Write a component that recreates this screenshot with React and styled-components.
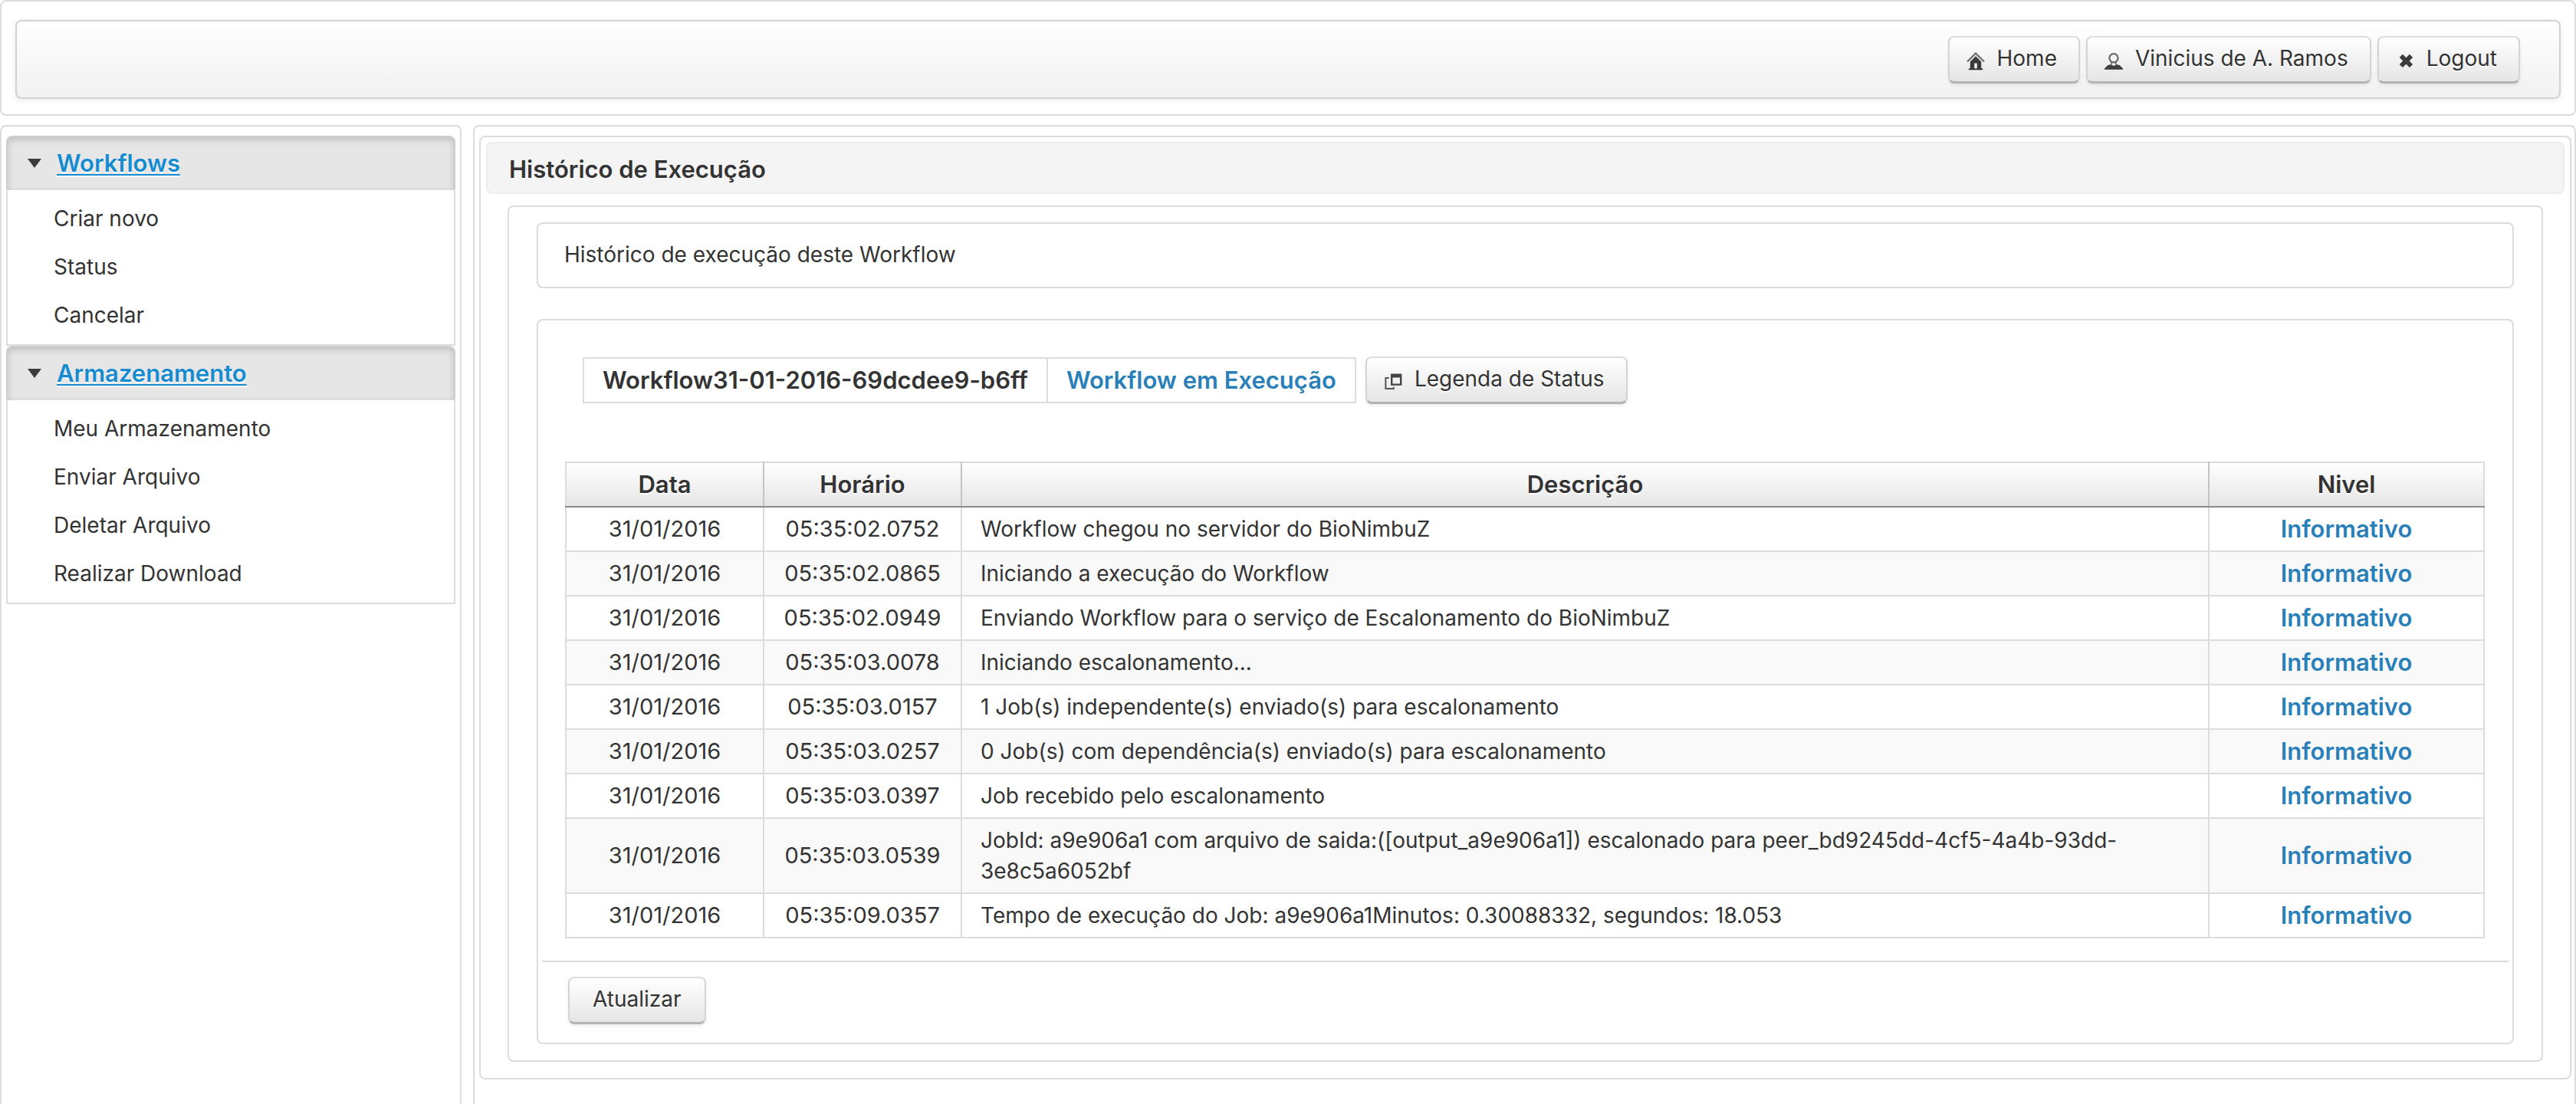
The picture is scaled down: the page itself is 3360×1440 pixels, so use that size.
import React from "react";
import styled, { createGlobalStyle, css } from "styled-components";

const LINE = "#dcdcdc";
const BLUE = "#2980b9";

const GlobalStyle = createGlobalStyle`
  *, *::before, *::after { box-sizing: border-box; }
  body {
    margin: 0;
    background: #fff;
    color: #333;
    font-family: Inter, "Liberation Sans", sans-serif;
    font-size: 28px;
    line-height: 40px;
  }
`;

const strong = css`
  font-size: 31px;
  font-weight: 600;
`;

const Page = styled.div`
  display: flex;
  flex-direction: column;
  gap: 12px;
  height: 100vh;
  overflow: hidden;
`;

const Panel = styled.section`
  border: 2px solid ${LINE};
  border-radius: 8px;
`;

const North = styled(Panel).attrs({ as: "header" })`
  padding: 24px 18px 20px;
`;

const Toolbar = styled.nav`
  display: flex;
  justify-content: flex-end;
  gap: 8px;
  padding: 19px 51px 18px;
  border: 2px solid #d2d2d2;
  border-radius: 8px;
  background: linear-gradient(#fff, #f1f1f1);
  box-shadow: 0 2px 8px rgba(0, 0, 0, 0.08);
`;

const Button = styled.button`
  display: inline-flex;
  align-items: flex-end;
  gap: 16px;
  padding: 7px ${(p) => (p.$icon ? "28px" : "30px")} 10px ${(p) => (p.$icon ? "22px" : "30px")};
  border: 2px solid #d4d4d4;
  border-top-color: #dedede;
  border-bottom: 3px solid #b4b4b4;
  border-radius: 8px;
  background: linear-gradient(#fff, #e5e5e5);
  box-shadow: 0 2px 4px rgba(0, 0, 0, 0.08);
  color: #333;
  font: inherit;
  text-shadow: 0 2px 0 #fff;
  white-space: nowrap;
  cursor: pointer;
`;

const Glyph = styled.svg`
  width: 24px;
  height: 24px;
  margin-bottom: 4px;
  flex: none;
`;

const Columns = styled.div`
  display: grid;
  grid-template-columns: 602px minmax(0, 1fr);
  gap: 15px;
  flex: 1;
  min-height: 0;
`;

const West = styled(Panel).attrs({ as: "aside" })`
  padding: 12px 6px;
  border-bottom: 0;
  border-radius: 8px 8px 0 0;
`;

const Center = styled(Panel).attrs({ as: "main" })`
  padding: 12px 4px 0 6px;
  border-bottom: 0;
  border-radius: 8px 8px 0 0;
`;

const MenuHeader = styled.h3`
  display: flex;
  align-items: center;
  gap: 20px;
  margin: 0;
  padding: 14px 26px 15px;
  border: 2px solid #cecece;
  border-bottom: 0;
  border-radius: 8px 8px 2px 2px;
  background: #e6e6e6;
  box-shadow: inset 0 3px 8px rgba(0, 0, 0, 0.18);
  text-shadow: 0 2px 0 #fff;
  ${strong}
`;

const Arrow = styled.svg`
  width: 18px;
  height: 12px;
  flex: none;
`;

const MenuLink = styled.a`
  color: #168bd0;
  text-decoration: underline;
  text-decoration-thickness: 2px;
  text-underline-offset: 3px;
`;

const MenuList = styled.ul`
  margin: 0;
  padding: 5px 0 7px;
  border: 2px solid ${LINE};
  border-top: 0;
  list-style: none;
`;

const MenuItem = styled.li`
  display: flex;
  align-items: center;
  height: 63px;
  padding: 0 60px;
`;

const ItemLink = styled.a`
  color: inherit;
  text-decoration: none;
`;

const Outer = styled(Panel)`
  padding: 6px 7px 21px;
`;

const Title = styled.h2`
  margin: 0 0 15px;
  padding: 14px 28px 10px;
  border: 2px solid #ececec;
  border-radius: 8px;
  background: #f4f4f4;
  ${strong}
`;

const Inner = styled(Panel)`
  margin: 0 28px;
  padding: 20px 36px 21px;
`;

const Intro = styled(Panel)`
  margin-bottom: 40px;
  padding: 20px 34px 22px;
`;

const History = styled(Panel)`
  padding: 47px 5px 24px;
`;

const StatusRow = styled.div`
  display: flex;
  align-items: center;
  gap: 12px;
  margin: 0 53px 75px;
`;

const StatusBox = styled.div`
  display: flex;
  border: 2px solid ${LINE};
`;

const StatusCell = styled.div`
  padding: 8px 24px;
  white-space: nowrap;
  color: ${(p) => (p.$state ? BLUE : "inherit")};
  border-left: ${(p) => (p.$state ? `2px solid ${LINE}` : "0")};
  ${strong}
`;

const TableWrap = styled.div`
  padding: 0 31px 29px 30px;
  border-bottom: 2px solid ${LINE};
`;

const Table = styled.table`
  width: 100%;
  table-layout: fixed;
  border-collapse: collapse;
`;

const Col = styled.col`
  width: ${(p) => p.$width};
`;

const Th = styled.th`
  padding: 8px 24px;
  border: 2px solid #c4c4c4;
  border-top-color: ${LINE};
  border-bottom-color: #8c8c8e;
  background: linear-gradient(#fff, #e6e6e6);
  text-shadow: 0 2px 0 #fff;
  ${strong}
  &:first-child { border-left-color: ${LINE}; }
  &:last-child { border-right-color: ${LINE}; }
`;

const Row = styled.tr`
  &:nth-child(even) { background: #f9f9f9; }
`;

const Td = styled.td`
  padding: 8px 24px;
  border: 2px solid ${LINE};
`;

const Stamp = styled(Td)`
  padding: 8px;
  font-size: 29px;
  text-align: center;
`;

const Level = styled(Td)`
  color: ${BLUE};
  text-align: center;
  ${strong}
`;

const Footer = styled.div`
  padding: 19px 34px 0;
`;

const HomeIcon = () => (
  <Glyph viewBox="0 0 12 12" aria-hidden="true">
    <path d="M.5 6.2 6 .8l5.5 5.4" fill="none" stroke="#777" strokeWidth="1.2" />
    <path d="M6 2.6 9.6 6.2V10.6h1v1h-9.2v-1h1V6.2Z M5.1 7.2V10.6h1.8V7.2Z" fill="#3b3b3b" fillRule="evenodd" />
  </Glyph>
);

const PersonIcon = () => (
  <Glyph viewBox="0 0 12 12" aria-hidden="true">
    <circle cx="6" cy="3.9" r="2.8" fill="none" stroke="#666" strokeWidth="1.1" />
    <path d="M4.6 6v2M7.4 6v2" stroke="#666" strokeWidth=".8" />
    <path d="M0 11.4V10.6L2.2 8.5 4.2 8 6 9l1.8-1 2 .5L12 10.6v.8Z" fill="#3f3f3f" />
  </Glyph>
);

const CloseIcon = () => (
  <Glyph viewBox="0 0 12 12" aria-hidden="true">
    <path d="M3.4 2.4 10 9M10 2.4 3.4 9" stroke="#3b3b3b" strokeWidth="3" />
  </Glyph>
);

const WindowIcon = () => (
  <Glyph viewBox="0 0 12 12" aria-hidden="true">
    <path d="M3.4 3.5H1.2v7h5.2V9.4" fill="none" stroke="#555" strokeWidth="1" />
    <path d="M4.5.8h7.2v7.6H4.5Z M5.7 3.2v4h4.8v-4Z" fill="#444" fillRule="evenodd" />
  </Glyph>
);

const MENUS = [
  { title: "Workflows", items: ["Criar novo", "Status", "Cancelar"] },
  {
    title: "Armazenamento",
    items: ["Meu Armazenamento", "Enviar Arquivo", "Deletar Arquivo", "Realizar Download"],
  },
];

const ROWS = [
  ["05:35:02.0752", "Workflow chegou no servidor do BioNimbuZ"],
  ["05:35:02.0865", "Iniciando a execução do Workflow"],
  ["05:35:02.0949", "Enviando Workflow para o serviço de Escalonamento do BioNimbuZ"],
  ["05:35:03.0078", "Iniciando escalonamento..."],
  ["05:35:03.0157", "1 Job(s) independente(s) enviado(s) para escalonamento"],
  ["05:35:03.0257", "0 Job(s) com dependência(s) enviado(s) para escalonamento"],
  ["05:35:03.0397", "Job recebido pelo escalonamento"],
  [
    "05:35:03.0539",
    "JobId: a9e906a1 com arquivo de saida:([output_a9e906a1]) escalonado para peer_bd9245dd-4cf5-4a4b-93dd-3e8c5a6052bf",
  ],
  ["05:35:09.0357", "Tempo de execução do Job: a9e906a1Minutos: 0.30088332, segundos: 18.053"],
];

export default function App() {
  return (
    <>
      <GlobalStyle />
      <Page>
        <North>
          <Toolbar>
            <Button type="button" $icon><HomeIcon />Home</Button>
            <Button type="button" $icon><PersonIcon />Vinicius de A. Ramos</Button>
            <Button type="button" $icon><CloseIcon />Logout</Button>
          </Toolbar>
        </North>
        <Columns>
          <West>
            {MENUS.map((menu) => (
              <React.Fragment key={menu.title}>
                <MenuHeader>
                  <Arrow viewBox="0 0 18 12" aria-hidden="true">
                    <path d="M0 0h18L9 12Z" fill="#3b3b3b" />
                  </Arrow>
                  <MenuLink href="#">{menu.title}</MenuLink>
                </MenuHeader>
                <MenuList>
                  {menu.items.map((item) => (
                    <MenuItem key={item}>
                      <ItemLink href="#">{item}</ItemLink>
                    </MenuItem>
                  ))}
                </MenuList>
              </React.Fragment>
            ))}
          </West>
          <Center>
            <Outer>
              <Title>Histórico de Execução</Title>
              <Inner>
                <Intro>Histórico de execução deste Workflow</Intro>
                <History>
                  <StatusRow>
                    <StatusBox>
                      <StatusCell>Workflow31-01-2016-69dcdee9-b6ff</StatusCell>
                      <StatusCell $state>Workflow em Execução</StatusCell>
                    </StatusBox>
                    <Button type="button" $icon><WindowIcon />Legenda de Status</Button>
                  </StatusRow>
                  <TableWrap>
                    <Table>
                      <colgroup>
                        <Col $width="258px" />
                        <Col $width="258px" />
                        <Col $width="auto" />
                        <Col $width="359px" />
                      </colgroup>
                      <thead>
                        <tr>
                          <Th scope="col">Data</Th>
                          <Th scope="col">Horário</Th>
                          <Th scope="col">Descrição</Th>
                          <Th scope="col">Nivel</Th>
                        </tr>
                      </thead>
                      <tbody>
                        {ROWS.map(([time, text]) => (
                          <Row key={time}>
                            <Stamp>31/01/2016</Stamp>
                            <Stamp>{time}</Stamp>
                            <Td>{text}</Td>
                            <Level>Informativo</Level>
                          </Row>
                        ))}
                      </tbody>
                    </Table>
                  </TableWrap>
                  <Footer>
                    <Button type="button">Atualizar</Button>
                  </Footer>
                </History>
              </Inner>
            </Outer>
          </Center>
        </Columns>
      </Page>
    </>
  );
}
